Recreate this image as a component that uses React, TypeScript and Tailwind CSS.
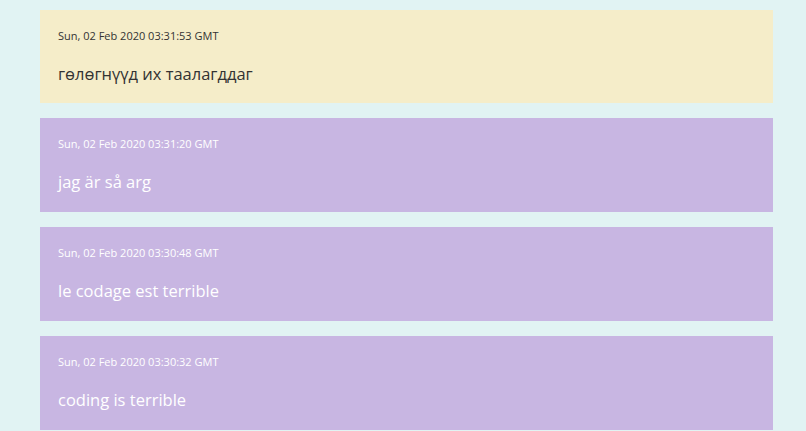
const messages = [
  { date: 'Sun, 02 Feb 2020 03:31:53 GMT', text: 'гөлөгнүүд их таалагддаг', mine: true },
  { date: 'Sun, 02 Feb 2020 03:31:20 GMT', text: 'jag är så arg', mine: false },
  { date: 'Sun, 02 Feb 2020 03:30:48 GMT', text: 'le codage est terrible', mine: false },
  { date: 'Sun, 02 Feb 2020 03:30:32 GMT', text: 'coding is terrible', mine: false },
];

export default function App() {
  return (
    <div
      className="min-h-screen h-[431px] overflow-hidden bg-[#e1f3f3] pt-[10px] pl-[40px] pr-[33px]"
      style={{ fontFamily: '"Open Sans", "Noto Sans", sans-serif' }}
    >
      <div className="flex flex-col gap-[15px]">
        {messages.map((m) => (
          <div
            key={m.date}
            className={
              m.mine
                ? 'h-[93px] bg-[#f5edc9] text-[#333333] px-[18px] pt-[18px]'
                : 'h-[94px] bg-[#c8b6e2] text-white px-[18px] pt-[18px]'
            }
          >
            <p className="text-[11px] leading-[16px]">{m.date}</p>
            <p className="mt-[18px] text-[16.5px] leading-[24px]">{m.text}</p>
          </div>
        ))}
      </div>
    </div>
  );
}
